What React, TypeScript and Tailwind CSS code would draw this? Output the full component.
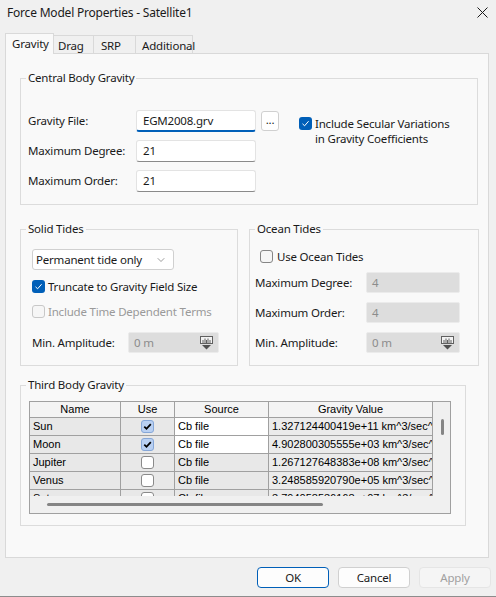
import React from 'react';
import { ChevronDown } from 'lucide-react';

const font = { fontFamily: '"Segoe UI", "Noto Sans", sans-serif' };

const Check = ({ checked, disabled }: { checked?: boolean; disabled?: boolean }) => {
    if (checked) {
        return (
            <span className="w-[13px] h-[13px] rounded-[3px] bg-[#005fb8] flex items-center justify-center shrink-0">
                <svg width="9" height="9" viewBox="0 0 9 9" fill="none">
                    <path d="M1.5 4.8 L3.6 6.8 L7.6 2.2" stroke="white" strokeWidth="1" />
                </svg>
            </span>
        );
    }
    return (
        <span
            className={`w-[13px] h-[13px] rounded-[3px] border shrink-0 ${
                disabled ? 'border-[#c8c8c8] bg-[#f6f6f6]' : 'border-[#858585] bg-[#f5f5f5]'
            }`}
        ></span>
    );
};

const TextBox = ({ value, focused, w }: { value: string; focused?: boolean; w: string }) => (
    <div
        className={`${w} h-[22px] bg-white rounded-[3px] border border-[#e3e3e3] flex items-center pl-[6px] text-[#1a1a1a] ${
            focused ? 'border-b-2 border-b-[#005fb8]' : 'border-b-[#8a8a8a]'
        }`}
    >
        {value}
    </div>
);

const DisabledBox = ({ value, w, spin }: { value: string; w: string; spin?: boolean }) => (
    <div className={`${w} h-[21px] bg-[#dddddd] border border-[#ebebeb] rounded-[2px] flex items-center justify-between pl-[5px] pr-[4px] text-[#8c8c8c]`}>
        <span>{value}</span>
        {spin && (
            <svg width="15" height="14" viewBox="0 0 15 14" fill="none">
                <rect x="1.5" y="0.5" width="12" height="7" fill="#f2f2f2" stroke="#606060" />
                <path d="M4 7V4M6 7V2.5M7.5 7V4M9 7V2.5M11 7V4" stroke="#606060" />
                <path d="M3 9h9l-4.5 4.5z" fill="#505050" />
            </svg>
        )}
    </div>
);

// fieldset carries no padding so the legend stays at a fixed inset; padding goes on the inner div
const Group = ({ title, className, inner, children }: { title: string; className: string; inner: string; children: React.ReactNode }) => (
    <fieldset className={`border border-[#dcdcdc] ${className}`}>
        <legend className="ml-[5px] px-[2px] leading-[16px] text-[#1a1a1a]">{title}</legend>
        <div className={inner}>{children}</div>
    </fieldset>
);

const bodies = [
    { name: 'Sun', use: true, value: '1.327124400419e+11 km^3/sec^2' },
    { name: 'Moon', use: true, value: '4.902800305555e+03 km^3/sec^2' },
    { name: 'Jupiter', use: false, value: '1.267127648383e+08 km^3/sec^2' },
    { name: 'Venus', use: false, value: '3.248585920790e+05 km^3/sec^2' },
    { name: 'Saturn', use: false, value: '3.794058536168e+07 km^3/sec^2' },
];

const TableCheck = ({ checked }: { checked: boolean }) =>
    checked ? (
        <span className="w-[13px] h-[13px] rounded-[3px] bg-[#b9d0f2] border border-[#86a7d8] flex items-center justify-center">
            <svg width="9" height="9" viewBox="0 0 9 9" fill="none">
                <path d="M1.3 4.6 L3.5 6.8 L7.8 2.2" stroke="black" strokeWidth="1.8" />
            </svg>
        </span>
    ) : (
        <span className="w-[13px] h-[13px] rounded-[3px] bg-white border border-[#8a8a8a]"></span>
    );

const ThirdBodyTable = () => {
    const cell = 'border-r border-b border-[#a0a0a0] flex items-center';
    return (
        <div className="w-[422px] h-[113px] border border-[#a0a0a0] bg-[#f0f0f0] flex flex-col tracking-normal" style={{ fontFamily: '"Liberation Sans", Arial, sans-serif' }}>
            <div className="flex">
                <div className="w-[403px] h-[94px] overflow-hidden">
                    <div className="grid grid-cols-[91px_54px_94px_164px] text-[11px] text-black">
                        <div className={`${cell} h-[16px] justify-center bg-[#f4f4f4]`}>Name</div>
                        <div className={`${cell} h-[16px] justify-center bg-[#f4f4f4]`}>Use</div>
                        <div className={`${cell} h-[16px] justify-center bg-[#f4f4f4]`}>Source</div>
                        <div className={`${cell} h-[16px] justify-center bg-[#f4f4f4]`}>Gravity Value</div>
                        {bodies.map((b, i) => (
                            <React.Fragment key={b.name}>
                                <div className={`${cell} h-[18px] pl-[3px] bg-[#e8e8e8]`}>{b.name}</div>
                                <div className={`${cell} h-[18px] justify-center bg-[#e8e8e8]`}>
                                    <TableCheck checked={b.use} />
                                </div>
                                <div className={`${cell} h-[18px] pl-[3px] ${i < 2 ? 'bg-white' : 'bg-[#e8e8e8]'}`}>Cb file</div>
                                <div className={`${cell} h-[18px] pl-[3px] bg-[#ebebeb] whitespace-nowrap overflow-hidden`}>{b.value}</div>
                            </React.Fragment>
                        ))}
                    </div>
                </div>
                <div className="w-[17px] h-[94px] pt-[17px] pl-[8px]">
                    <div className="w-[3px] h-[16px] rounded-full bg-[#858585]"></div>
                </div>
            </div>
            <div className="h-[18px] flex items-center pl-[17px]">
                <div className="w-[276px] h-[3px] rounded-full bg-[#858585]"></div>
            </div>
        </div>
    );
};

const App: React.FC = () => {
    return (
        <div className="w-[496px] h-[597px] bg-[#f0f0f0] text-[11.5px] tracking-[-0.2px] text-[#1a1a1a] flex flex-col border-b border-[#8c8c8c] overflow-hidden" style={font}>
            {/* Title bar */}
            <div className="h-[25px] flex items-center justify-between pl-[7px] pr-[8px]">
                <span className="text-[12px]">Force Model Properties - Satellite1</span>
                <svg width="11" height="11" viewBox="0 0 11 11" fill="none">
                    <path d="M0.5 0.5 L10.5 10.5 M10.5 0.5 L0.5 10.5" stroke="#1a1a1a" strokeWidth="1" />
                </svg>
            </div>

            {/* Tabs */}
            <div className="mt-[8px] h-[20px] flex items-end pl-[5px] relative z-10">
                <div className="h-[21px] -mb-[1px] w-[49px] bg-[#f9f9f9] border border-b-0 border-[#d9d9d9] pl-[6px] pt-[1px]">Gravity</div>
                <div className="h-[18px] w-[40px] bg-[#f0f0f0] border-t border-r border-[#d9d9d9] pl-[4px] pt-[1px]">Drag</div>
                <div className="h-[18px] w-[42px] bg-[#f0f0f0] border-t border-r border-[#d9d9d9] pl-[7px] pt-[1px]">SRP</div>
                <div className="h-[18px] w-[57px] bg-[#f0f0f0] border-t border-r border-[#d9d9d9] pl-[6px] pt-[1px]">Additional</div>
            </div>

            {/* Tab panel */}
            <div className="ml-[5px] w-[484px] h-[505px] bg-[#f9f9f9] border border-[#d9d9d9] pt-[16px] pl-[14px] flex flex-col">
                <Group title="Central Body Gravity" className="w-[458px] h-[135px]" inner="pl-[7px] pt-[24px]">
                    <div className="flex">
                        <div className="flex flex-col gap-[8px]">
                            <div className="flex items-center">
                                <span className="w-[108px]">Gravity File:</span>
                                <TextBox value="EGM2008.grv" focused w="w-[120px]" />
                                <div className="ml-[5px] w-[18px] h-[20px] bg-white border border-[#d0d0d0] rounded-[3px] flex items-center justify-center leading-none pb-[2px]">...</div>
                            </div>
                            <div className="flex items-center">
                                <span className="w-[108px]">Maximum Degree:</span>
                                <TextBox value="21" w="w-[120px]" />
                            </div>
                            <div className="flex items-center">
                                <span className="w-[108px]">Maximum Order:</span>
                                <TextBox value="21" w="w-[120px]" />
                            </div>
                        </div>
                        <div className="ml-[20px] pt-[6px] flex items-start gap-[3px]">
                            <span className="mt-[1px]">
                                <Check checked />
                            </span>
                            <span className="leading-[15px]">
                                Include Secular Variations
                                <br />
                                in Gravity Coefficients
                            </span>
                        </div>
                    </div>
                </Group>

                <div className="mt-[16px] flex gap-[11px]">
                    <Group title="Solid Tides" className="w-[218px] h-[145px]" inner="pl-[11px] pt-[12px]">
                        <div className="w-[142px] h-[21px] bg-white border border-[#d0d0d0] rounded-[3px] flex items-center justify-between pl-[3px] pr-[6px]">
                            <span>Permanent tide only</span>
                            <ChevronDown size={12} strokeWidth={1.25} color="#606060" />
                        </div>
                        <div className="mt-[10px] flex items-center gap-[3px] h-[13px]">
                            <Check checked />
                            <span>Truncate to Gravity Field Size</span>
                        </div>
                        <div className="mt-[12px] flex items-center gap-[3px] h-[13px] text-[#9a9a9a]">
                            <Check disabled />
                            <span>Include Time Dependent Terms</span>
                        </div>
                        <div className="mt-[14px] flex items-center">
                            <span className="w-[96px]">Min. Amplitude:</span>
                            <DisabledBox value="0 m" w="w-[91px]" spin />
                        </div>
                    </Group>

                    <Group title="Ocean Tides" className="w-[230px] h-[145px]" inner="pl-[5px] pt-[13px]">
                        <div className="pl-[5px] flex items-center gap-[4px] h-[13px]">
                            <Check />
                            <span>Use Ocean Tides</span>
                        </div>
                        <div className="mt-[9px] flex flex-col gap-[9px]">
                            <div className="flex items-center">
                                <span className="w-[111px]">Maximum Degree:</span>
                                <DisabledBox value="4" w="w-[94px]" />
                            </div>
                            <div className="flex items-center">
                                <span className="w-[111px]">Maximum Order:</span>
                                <DisabledBox value="4" w="w-[94px]" />
                            </div>
                            <div className="flex items-center">
                                <span className="w-[111px]">Min. Amplitude:</span>
                                <DisabledBox value="0 m" w="w-[94px]" spin />
                            </div>
                        </div>
                    </Group>
                </div>

                <Group title="Third Body Gravity" className="mt-[11px] w-[446px] h-[149px]" inner="pl-[8px] pt-[8px]">
                    <ThirdBodyTable />
                </Group>
            </div>

            {/* Buttons */}
            <div className="mt-[9px] flex justify-end gap-[9px] pr-[5px]">
                <button className="w-[72px] h-[21px] bg-[#fdfdfd] border border-[#005fb8] rounded-[4px]">OK</button>
                <button className="w-[72px] h-[21px] bg-[#fdfdfd] border border-[#d0d0d0] rounded-[4px]">Cancel</button>
                <button className="w-[72px] h-[21px] bg-[#f5f5f5] border border-[#e5e5e5] rounded-[4px] text-[#a0a0a0]">Apply</button>
            </div>
        </div>
    );
};

export default App;
